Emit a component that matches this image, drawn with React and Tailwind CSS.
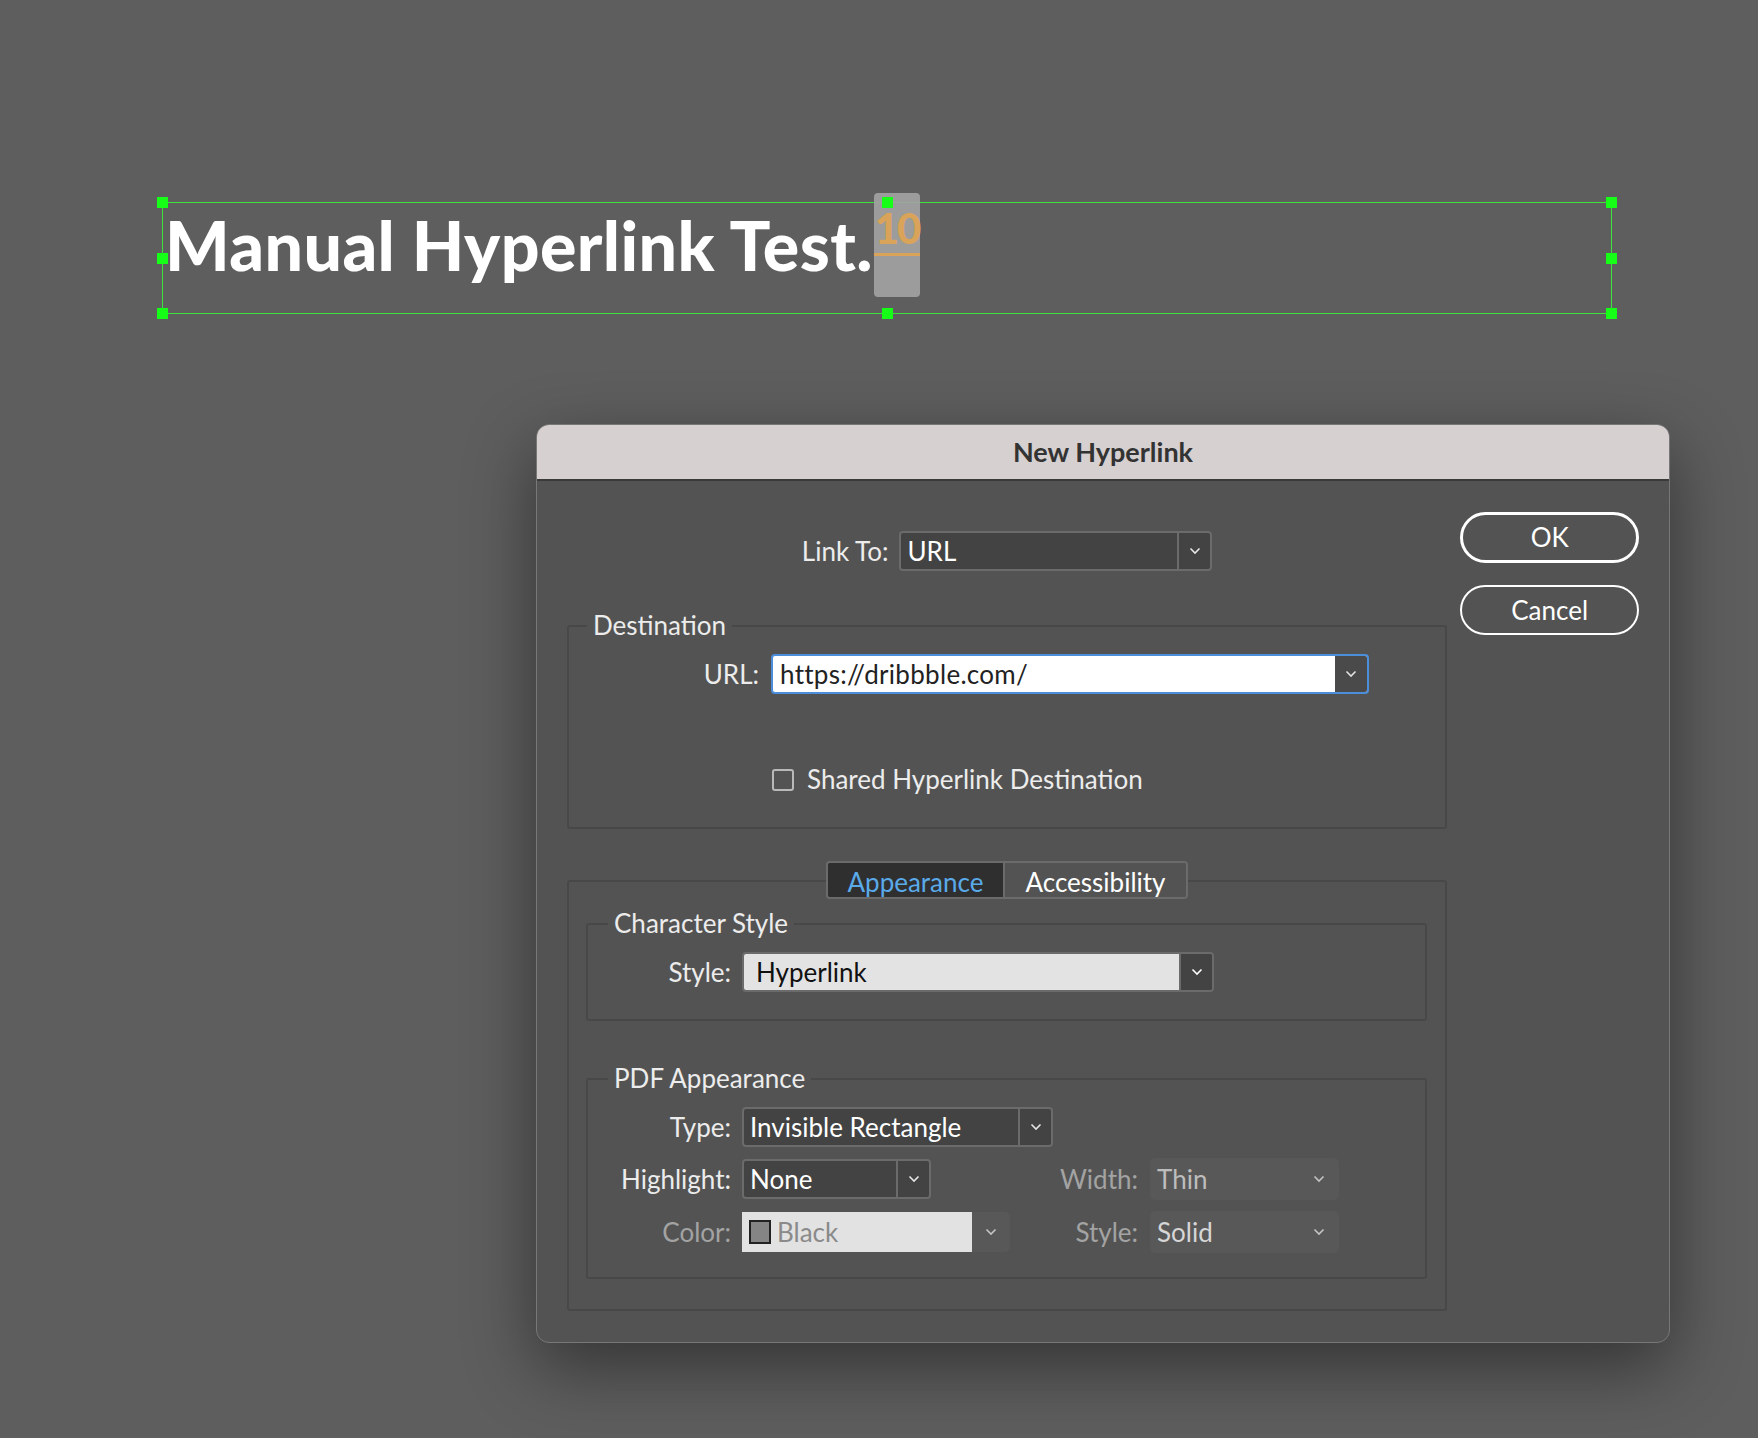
import { useState } from "react";

const UI_FONT = "font-['Lato','Noto_Sans',sans-serif]";

function Chevron({ className = "" }) {
  return (
    <svg viewBox="0 0 12 8" className={`w-[12px] h-[8px] ${className}`} fill="none">
      <polyline points="1.5,1.5 6,6 10.5,1.5" stroke="currentColor" strokeWidth="1.6" />
    </svg>
  );
}

// dark popup with a separated chevron cell
function DarkSelect({ value, width }) {
  return (
    <div
      className="flex h-[40px] rounded-[4px] border-2 border-[#6b6b6b] bg-[#434343] overflow-hidden"
      style={{ width }}
    >
      <div className="flex-1 flex items-center pl-[6px] text-[26px] text-white">{value}</div>
      <div className="w-[33px] flex items-center justify-center border-l-2 border-[#6b6b6b] text-[#e6e6e6]">
        <Chevron />
      </div>
    </div>
  );
}

// greyed-out popup (no border)
function FlatSelect({ value, textColor }) {
  return (
    <div className="flex h-[42px] w-[189px] items-center rounded-[5px] bg-[#585858] pl-[7px] pr-[14px]">
      <span className={`flex-1 text-[26px] ${textColor}`}>{value}</span>
      <Chevron className="text-[#c4c4c4]" />
    </div>
  );
}

function Handle({ className }) {
  return <div className={`absolute w-[11px] h-[11px] bg-[#16ff16] ${className}`} />;
}

export default function App() {
  const [shared, setShared] = useState(false);
  const [tab, setTab] = useState("appearance");

  return (
    <div className={`relative w-[1758px] h-[1438px] overflow-hidden bg-[#5e5e5e] ${UI_FONT}`}>
      {/* text frame on the page */}
      <div className="absolute left-[162px] top-[202px] w-[1450px] h-[112px] border border-[#3ee13e]">
        <div className="pl-[2px] pt-[2px] text-[68px] leading-[80px] font-black tracking-[0.4px] text-white font-['Lato',sans-serif]">
          Manual Hyperlink Test.
        </div>
        <div className="absolute left-[711px] -top-[10px] w-[46px] h-[104px] rounded-[4px] bg-[#a3a3a3]/90 flex flex-col items-center">
          <span className="mt-[14px] text-[42px] leading-[42px] font-black tracking-[-2px] text-[#d9a35a] font-['Lato',sans-serif]">10</span>
          <div className="mt-[4px] h-[3px] w-full bg-[#d9a35a]" />
        </div>
        <Handle className="-left-[6px] -top-[6px]" />
        <Handle className="left-[719px] -top-[6px]" />
        <Handle className="-right-[6px] -top-[6px]" />
        <Handle className="-left-[6px] top-[50px]" />
        <Handle className="-right-[6px] top-[50px]" />
        <Handle className="-left-[6px] -bottom-[6px]" />
        <Handle className="left-[719px] -bottom-[6px]" />
        <Handle className="-right-[6px] -bottom-[6px]" />
      </div>

      {/* dialog window */}
      <div className="absolute left-[536px] top-[424px] w-[1134px] h-[919px] rounded-[13px] bg-[#535353] overflow-hidden border border-[#777] shadow-[0_24px_70px_rgba(0,0,0,0.45)]">
        <div className="h-[56px] bg-[#d6d0d0] border-b-2 border-[#3a3a3a] flex items-center justify-center">
          <span className="text-[27px] font-bold text-[#333]">New Hyperlink</span>
        </div>

        <div className="flex pl-[30px] pr-[30px] text-[#ececec]">
          {/* left column */}
          <div className="w-[882px]">
            <div className="mt-[50px] flex items-center justify-center gap-[11px]">
              <span className="text-[26px]">Link To:</span>
              <DarkSelect value="URL" width={313} />
            </div>

            {/* Destination */}
            <div className="relative mt-[54px] h-[204px] border-2 border-[#484848] rounded-[3px]">
              <span className="absolute -top-[19px] left-[18px] px-[6px] bg-[#535353] text-[26px] leading-[34px]">
                Destination
              </span>
              <div className="mt-[27px] flex items-center">
                <span className="w-[190px] text-right text-[26px]">URL:</span>
                <div className="ml-[12px] flex h-[40px] w-[598px] rounded-[4px] border-2 border-[#4b8fdc] bg-white overflow-hidden">
                  <div className="flex-1 flex items-center pl-[7px] text-[26px] text-[#222] tracking-[0.3px]">
                    https://dribbble.com/
                  </div>
                  <div className="w-[32px] flex items-center justify-center bg-[#4a4a4a] text-[#e0e0e0]">
                    <Chevron />
                  </div>
                </div>
              </div>
              <label className="mt-[66px] ml-[203px] flex items-center gap-[13px] cursor-pointer">
                <button
                  type="button"
                  onClick={() => setShared(!shared)}
                  className="w-[22px] h-[22px] rounded-[3px] border-2 border-[#b9b9b9] bg-[#535353]"
                />
                <span className="text-[26px]">Shared Hyperlink Destination</span>
              </label>
            </div>

            {/* Appearance / Accessibility */}
            <div className="relative mt-[51px] h-[431px] border-2 border-[#484848] rounded-[3px]">
              <div className="absolute -top-[21px] left-[257px] flex h-[38px] rounded-[4px] border-2 border-[#6b6b6b] overflow-hidden">
                <button
                  type="button"
                  onClick={() => setTab("appearance")}
                  className={`w-[175px] text-[26px] ${tab === "appearance" ? "bg-[#2f2f2f] text-[#5aaaea]" : "bg-[#535353] text-white"}`}
                >
                  Appearance
                </button>
                <button
                  type="button"
                  onClick={() => setTab("accessibility")}
                  className={`w-[183px] border-l-2 border-[#6b6b6b] text-[26px] ${tab === "accessibility" ? "bg-[#2f2f2f] text-[#5aaaea]" : "bg-[#535353] text-white"}`}
                >
                  Accessibility
                </button>
              </div>

              {/* Character Style */}
              <div className="relative mt-[41px] ml-[17px] mr-[18px] h-[98px] border-2 border-[#484848] rounded-[3px]">
                <span className="absolute -top-[19px] left-[20px] px-[6px] bg-[#535353] text-[26px] leading-[34px]">
                  Character Style
                </span>
                <div className="mt-[27px] flex items-center">
                  <span className="w-[143px] text-right text-[26px]">Style:</span>
                  <div className="ml-[11px] flex h-[40px] w-[472px] rounded-[4px] border-2 border-[#6b6b6b] overflow-hidden">
                    <div className="flex-1 flex items-center pl-[12px] bg-[#e3e3e3] text-[26px] text-[#111]">Hyperlink</div>
                    <div className="w-[33px] flex items-center justify-center border-l-2 border-[#6b6b6b] bg-[#434343] text-white">
                      <Chevron />
                    </div>
                  </div>
                </div>
              </div>

              {/* PDF Appearance */}
              <div className="relative mt-[57px] ml-[17px] mr-[18px] h-[201px] border-2 border-[#484848] rounded-[3px]">
                <span className="absolute -top-[19px] left-[20px] px-[6px] bg-[#535353] text-[26px] leading-[34px]">
                  PDF Appearance
                </span>
                <div className="mt-[27px] flex flex-col gap-[11px]">
                  <div className="flex items-center">
                    <span className="w-[143px] text-right text-[26px]">Type:</span>
                    <div className="ml-[11px]">
                      <DarkSelect value="Invisible Rectangle" width={311} />
                    </div>
                  </div>
                  <div className="flex items-center">
                    <span className="w-[143px] text-right text-[26px]">Highlight:</span>
                    <div className="ml-[11px] w-[269px]">
                      <DarkSelect value="None" width={189} />
                    </div>
                    <span className="w-[127px] text-right text-[26px] text-[#a3a3a3]">Width:</span>
                    <div className="ml-[12px]">
                      <FlatSelect value="Thin" textColor="text-[#bdbdbd]" />
                    </div>
                  </div>
                  <div className="flex items-center">
                    <span className="w-[143px] text-right text-[26px] text-[#a3a3a3]">Color:</span>
                    <div className="ml-[11px] w-[269px] flex h-[40px]">
                      <div className="w-[230px] flex items-center gap-[6px] pl-[7px] bg-[#e2e2e2]">
                        <span className="w-[22px] h-[24px] border-2 border-[#222] bg-[#858585]" />
                        <span className="text-[26px] text-[#8a8a8a]">Black</span>
                      </div>
                      <div className="w-[38px] flex items-center justify-center rounded-r-[5px] bg-[#585858] text-[#c4c4c4]">
                        <Chevron />
                      </div>
                    </div>
                    <span className="w-[127px] text-right text-[26px] text-[#a3a3a3]">Style:</span>
                    <div className="ml-[12px]">
                      <FlatSelect value="Solid" textColor="text-[#d6d6d6]" />
                    </div>
                  </div>
                </div>
              </div>
            </div>
          </div>

          {/* buttons */}
          <div className="ml-[13px] w-[179px] pt-[31px] flex flex-col gap-[22px]">
            <button type="button" className="h-[51px] rounded-full border-[3px] border-white text-[26px] text-white">
              OK
            </button>
            <button type="button" className="h-[50px] rounded-full border-2 border-white text-[26px] text-white">
              Cancel
            </button>
          </div>
        </div>
      </div>
    </div>
  );
}
